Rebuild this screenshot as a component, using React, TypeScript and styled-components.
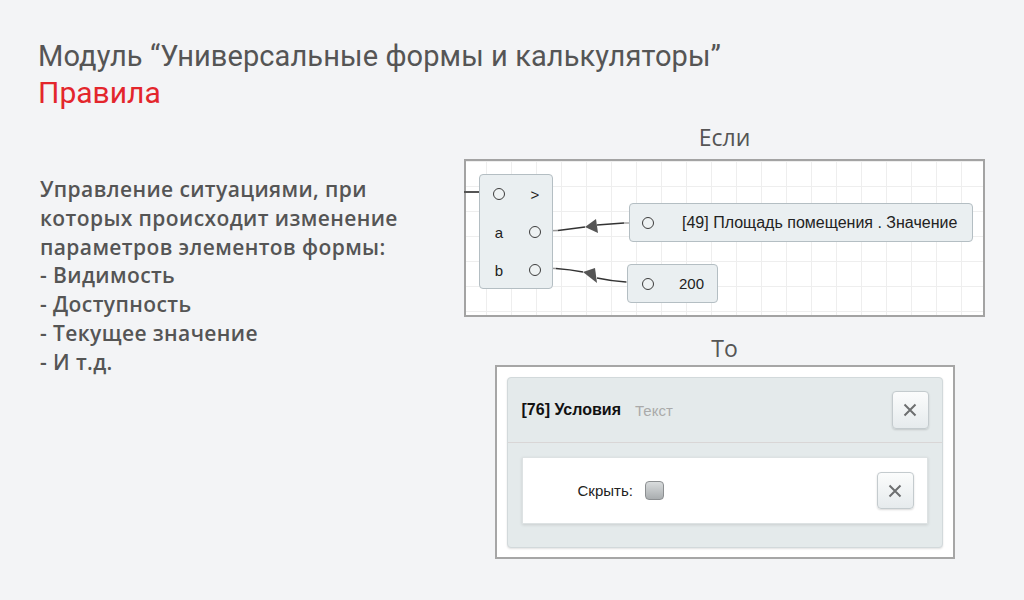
import * as React from "react";
import styled, { createGlobalStyle } from "styled-components";

const GlobalStyle = createGlobalStyle`
  html, body {
    margin: 0;
    padding: 0;
    background: #f3f4f6;
  }
  body {
    width: 1024px;
    height: 600px;
    overflow: hidden;
    font-family: "Open Sans", "Liberation Sans", sans-serif;
  }
`;

const Page = styled.div`
  width: 1024px;
  height: 600px;
  box-sizing: border-box;
  padding: 37px 0 0 38px;
  display: flex;
  flex-direction: column;
`;

const Title = styled.h1`
  margin: 0;
  font-family: "Roboto", "Liberation Sans", sans-serif;
  font-weight: 400;
  font-size: 29px;
  line-height: 38px;
  letter-spacing: 0.1px;
  color: #555;
`;

const Subtitle = styled.h2`
  margin: 0;
  font-family: "Roboto", "Liberation Sans", sans-serif;
  font-weight: 400;
  font-size: 30px;
  line-height: 36px;
  color: #e3262c;
`;

const Main = styled.div`
  display: grid;
  grid-template-columns: 426px 521px;
  margin-top: 11px;
`;

const Description = styled.div`
  padding: 53px 0 0 2px;
  font-size: 21px;
  font-weight: 600;
  line-height: 28.8px;
  letter-spacing: 0.4px;
  color: #555;
`;

const Line = styled.div`
  white-space: nowrap;
`;

const Scheme = styled.div`
  display: flex;
  flex-direction: column;
  align-items: center;
`;

const SectionLabel = styled.div<{ $gap: number }>`
  font-size: 23px;
  font-weight: 500;
  line-height: 30px;
  color: #555;
  margin-bottom: ${(p) => p.$gap}px;
`;

const Canvas = styled.div`
  position: relative;
  width: 521px;
  height: 158px;
  box-sizing: border-box;
  border: 2px solid #a3a3a3;
  background-color: #fff;
  background-image: linear-gradient(#eeeeee 1px, transparent 1px),
    linear-gradient(90deg, #eeeeee 1px, transparent 1px);
  background-size: 25px 25px;
  background-position: 20px 0px;
  margin-bottom: 16px;
`;

const Wires = styled.svg`
  position: absolute;
  left: 0;
  top: 0;
  width: 517px;
  height: 154px;
  overflow: visible;
`;

const Node = styled.div<{ $x: number; $y: number; $w: number; $h: number }>`
  position: absolute;
  left: ${(p) => p.$x}px;
  top: ${(p) => p.$y}px;
  width: ${(p) => p.$w}px;
  height: ${(p) => p.$h}px;
  box-sizing: border-box;
  background: #eaeff1;
  border: 1px solid #b4bec3;
  border-radius: 4px;
  font-family: "Liberation Sans", Arial, sans-serif;
  font-size: 15px;
  color: #222;
`;

const GateGrid = styled.div`
  display: grid;
  grid-template-columns: 24px 24px;
  grid-auto-rows: 38px;
  column-gap: 12px;
  padding-left: 7px;
  align-items: center;
  justify-items: center;
`;

const ValueRow = styled.div<{ $pad: number; $gap: number }>`
  display: flex;
  align-items: center;
  height: 100%;
  padding-left: ${(p) => p.$pad}px;
  gap: ${(p) => p.$gap}px;
  white-space: nowrap;
`;

const ValueText = styled.span<{ $size: number }>`
  font-size: ${(p) => p.$size}px;
`;

const Port = styled.span`
  display: block;
  width: 12px;
  height: 12px;
  box-sizing: border-box;
  border: 1.5px solid #3c3c3c;
  border-radius: 50%;
  background: #eef2f3;
`;

const Frame = styled.div`
  width: 460px;
  height: 194px;
  box-sizing: border-box;
  border: 2px solid #a6a6a6;
  background: #fff;
  padding: 10px 10px 9px 10px;
`;

const Panel = styled.div`
  height: 100%;
  box-sizing: border-box;
  background: #e4eaeb;
  border: 1px solid #d2d9db;
  border-radius: 4px;
  box-shadow: 0 1px 2px rgba(0, 0, 0, 0.12);
  display: flex;
  flex-direction: column;
  font-family: "Liberation Sans", Arial, sans-serif;
`;

const PanelHeader = styled.div`
  height: 64px;
  flex: none;
  display: flex;
  align-items: center;
  padding: 0 13px 0 14px;
  border-bottom: 1px solid #d9d6d6;
`;

const PanelTitle = styled.span`
  font-size: 16px;
  font-weight: 700;
  color: #111;
`;

const PanelHint = styled.span`
  margin-left: 14px;
  font-size: 15px;
  color: #aaa;
  flex: 1;
`;

const PanelBody = styled.div`
  padding: 14px 14px 0 14px;
`;

const Card = styled.div`
  height: 67px;
  box-sizing: border-box;
  background: #fff;
  border: 1px solid #dde2e3;
  box-shadow: 0 1px 3px rgba(0, 0, 0, 0.12);
  display: flex;
  align-items: center;
  padding: 0 13px 0 55px;
`;

const FieldLabel = styled.span`
  font-size: 15px;
  color: #222;
`;

const Checkbox = styled.span`
  display: block;
  width: 19px;
  height: 19px;
  margin-left: 12px;
  box-sizing: border-box;
  border: 1px solid #8c8f91;
  border-radius: 4px;
  background: linear-gradient(#d9dcdd, #a9adaf);
`;

const Spacer = styled.span`
  flex: 1;
`;

const CloseButton = styled.button<{ $w: number; $h: number }>`
  width: ${(p) => p.$w}px;
  height: ${(p) => p.$h}px;
  padding: 0;
  display: flex;
  align-items: center;
  justify-content: center;
  border: 1px solid #c4cbce;
  border-radius: 4px;
  background: linear-gradient(#fbfcfc, #e6ebed);
  box-shadow: 0 1px 2px rgba(0, 0, 0, 0.15);
`;

const CrossIcon = () => (
  <svg width="14" height="14" viewBox="0 0 14 14">
    <path d="M1.5 1.5 L12.5 12.5 M12.5 1.5 L1.5 12.5" stroke="#6d6f70" strokeWidth="2" />
  </svg>
);

export default function App() {
  return (
    <>
      <GlobalStyle />
      <Page>
        <Title>Модуль “Универсальные формы и калькуляторы”</Title>
        <Subtitle>Правила</Subtitle>
        <Main>
          <Description>
            <Line>Управление ситуациями, при</Line>
            <Line>которых происходит изменение</Line>
            <Line>параметров элементов формы:</Line>
            <Line>- Видимость</Line>
            <Line>- Доступность</Line>
            <Line>- Текущее значение</Line>
            <Line>- И т.д.</Line>
          </Description>
          <Scheme>
            <SectionLabel $gap={7}>Если</SectionLabel>
            <Canvas>
              <Wires viewBox="0 0 517 154">
                <path d="M-2 31 L22 31" stroke="#555" strokeWidth="2" fill="none" />
                <path d="M22 31 L28 31" stroke="#999" strokeWidth="1.5" fill="none" />
                <path d="M73 70 L92 69.5" stroke="#999" strokeWidth="1.3" fill="none" />
                <path d="M92 69.5 L119 66" stroke="#333" strokeWidth="1.6" fill="none" />
                <path d="M119 66 L130 58 L132 72 Z" fill="#555" />
                <path d="M131 64 L158 62" stroke="#333" strokeWidth="1.6" fill="none" />
                <path d="M158 62 L175 62" stroke="#999" strokeWidth="1.3" fill="none" />
                <path d="M73 107 L90 107.5" stroke="#999" strokeWidth="1.3" fill="none" />
                <path d="M90 107.5 Q104 108.5 117 111" stroke="#333" strokeWidth="1.6" fill="none" />
                <path d="M117 111 L129 107 L131 122 Z" fill="#555" />
                <path d="M131 117 Q145 120 160 121" stroke="#333" strokeWidth="1.6" fill="none" />
                <path d="M160 121 L175 121" stroke="#999" strokeWidth="1.3" fill="none" />
              </Wires>
              <Node $x={13} $y={13} $w={74} $h={115}>
                <GateGrid>
                  <Port />
                  <span>&gt;</span>
                  <span>a</span>
                  <Port />
                  <span>b</span>
                  <Port />
                </GateGrid>
              </Node>
              <Node $x={163} $y={42} $w={344} $h={39}>
                <ValueRow $pad={12} $gap={28}>
                  <Port />
                  <ValueText $size={16}>[49] Площадь помещения . Значение</ValueText>
                </ValueRow>
              </Node>
              <Node $x={161} $y={103} $w={91} $h={39}>
                <ValueRow $pad={14} $gap={25}>
                  <Port />
                  <ValueText $size={15}>200</ValueText>
                </ValueRow>
              </Node>
            </Canvas>
            <SectionLabel $gap={2}>То</SectionLabel>
            <Frame>
              <Panel>
                <PanelHeader>
                  <PanelTitle>[76] Условия</PanelTitle>
                  <PanelHint>Текст</PanelHint>
                  <CloseButton $w={37} $h={38}>
                    <CrossIcon />
                  </CloseButton>
                </PanelHeader>
                <PanelBody>
                  <Card>
                    <FieldLabel>Скрыть:</FieldLabel>
                    <Checkbox />
                    <Spacer />
                    <CloseButton $w={37} $h={37}>
                      <CrossIcon />
                    </CloseButton>
                  </Card>
                </PanelBody>
              </Panel>
            </Frame>
          </Scheme>
        </Main>
      </Page>
    </>
  );
}
